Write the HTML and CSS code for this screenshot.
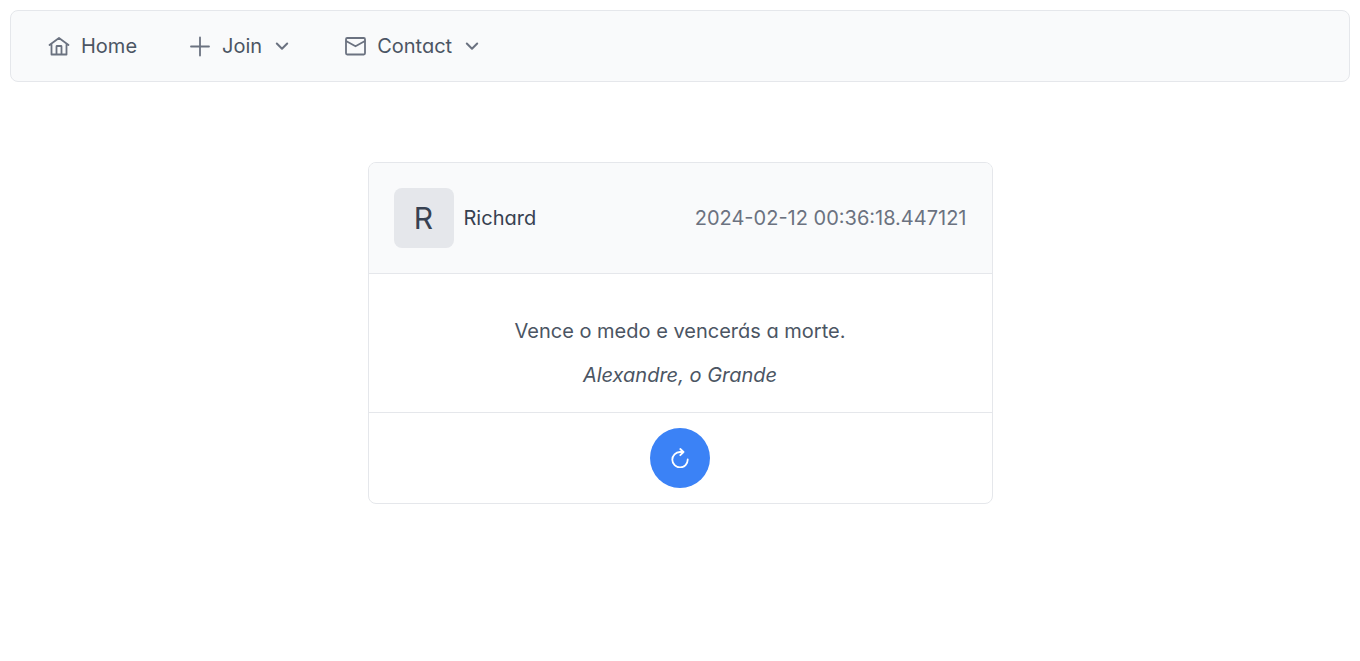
FILE: index.html
```html
<!DOCTYPE html>
<html lang="pt">
<head>
<meta charset="utf-8">
<meta name="viewport" content="width=device-width, initial-scale=1">
<title>Home</title>
<link rel="stylesheet" href="styles.css">
</head>
<body>
<nav class="menubar">
  <a class="menu-item" href="#">
    <svg class="icon" viewBox="0 0 25 25" aria-hidden="true"><path d="M3.500 11 13 4l9.500 7M5.500 9.800v10.700h15V9.800M10.500 20v-7.500q0-.5.5-.5h4q.5 0 .5.5V20"/></svg>
    Home
  </a>
  <button class="menu-item" type="button">
    <svg class="icon" viewBox="0 0 25 25" aria-hidden="true"><path d="M13 3.500v18M4 12.500h18"/></svg>
    Join
    <svg class="chevron" viewBox="0 0 20 20" aria-hidden="true"><path d="m4.800 7.500 5.200 5.200 5.200-5.200"/></svg>
  </button>
  <button class="menu-item" type="button">
    <svg class="icon" viewBox="0 0 25 25" aria-hidden="true"><rect x="4" y="4" width="19" height="16.500" rx="1.200"/><path d="m4.500 7.300 9 5 9-5"/></svg>
    Contact
    <svg class="chevron" viewBox="0 0 20 20" aria-hidden="true"><path d="m4.800 7.500 5.200 5.200 5.200-5.200"/></svg>
  </button>
</nav>
<main class="card">
  <header class="card-header">
    <div class="author">
      <span class="avatar" aria-hidden="true">R</span>
      <span>Richard</span>
    </div>
    <time class="date">2024-02-12 00:36:18.447121</time>
  </header>
  <blockquote class="quote">
    <p>Vence o medo e vencerás a morte.</p>
    <cite>Alexandre, o Grande</cite>
  </blockquote>
  <footer class="card-footer">
    <button class="reload" type="button" aria-label="Reload">
      <svg class="reload-icon" viewBox="0 0 20 20" aria-hidden="true"><path d="M17.700 11.500A7.700 7.700 0 1 1 10 4h3.500M10.300 1l3.200 3-3.200 3.200"/></svg>
    </button>
  </footer>
</main>
</body>
</html>
```
FILE: styles.css
```css
* {
  box-sizing: border-box;
}

body {
  margin: 10px;
  background: #ffffff;
  color: #4b5563;
  font-family: Inter, "Liberation Sans", sans-serif;
  font-feature-settings: "cv11";
  font-optical-sizing: none;
  font-size: 20px;
  line-height: 24px;
}

button {
  border: 0;
  background: none;
  color: inherit;
  font: inherit;
  font-feature-settings: inherit;
  font-optical-sizing: inherit;
  cursor: pointer;
}

svg {
  flex: none;
  fill: none;
  stroke: currentColor;
  stroke-linecap: round;
  stroke-linejoin: round;
}

.menubar {
  display: flex;
  flex-wrap: wrap;
  padding: 10px;
  border: 1px solid #e5e7eb;
  border-radius: 8px;
  background: #f9fafb;
}

.menu-item {
  display: flex;
  align-items: center;
  gap: 10px;
  min-height: 50px;
  padding: 12px 25px;
  color: #4b5563;
  text-decoration: none;
}

.icon {
  width: 25px;
  height: 25px;
  color: #6b7280;
  stroke-width: 1.8;
}

.chevron {
  width: 20px;
  height: 20px;
  color: #6b7280;
  stroke-width: 2;
}

.card {
  max-width: 625px;
  margin: 80px auto 0;
  border: 1px solid #e5e7eb;
  border-radius: 8px;
  overflow: hidden;
}

.card-header {
  display: flex;
  flex-wrap: wrap;
  align-items: center;
  justify-content: space-between;
  gap: 10px;
  padding: 25px;
  border-bottom: 1px solid #e5e7eb;
  background: #f9fafb;
  color: #374151;
}

.author {
  display: flex;
  align-items: center;
  gap: 10px;
}

.avatar {
  display: grid;
  place-items: center;
  width: 60px;
  height: 60px;
  border-radius: 8px;
  background: #e5e7eb;
  font-size: 30px;
}

.date {
  color: #6b7280;
}

.quote {
  margin: 0;
  padding: 45px 25px 25px;
  text-align: center;
}

.quote p {
  margin: 0 0 20px;
}

.quote cite {
  display: block;
}

.card-footer {
  display: flex;
  justify-content: center;
  padding: 15px;
  border-top: 1px solid #e5e7eb;
}

.reload {
  display: grid;
  place-items: center;
  width: 60px;
  height: 60px;
  padding: 0;
  border-radius: 50%;
  background: #3b82f6;
  color: #ffffff;
}

.reload-icon {
  width: 20px;
  height: 20px;
  stroke-width: 1.8;
}
```
